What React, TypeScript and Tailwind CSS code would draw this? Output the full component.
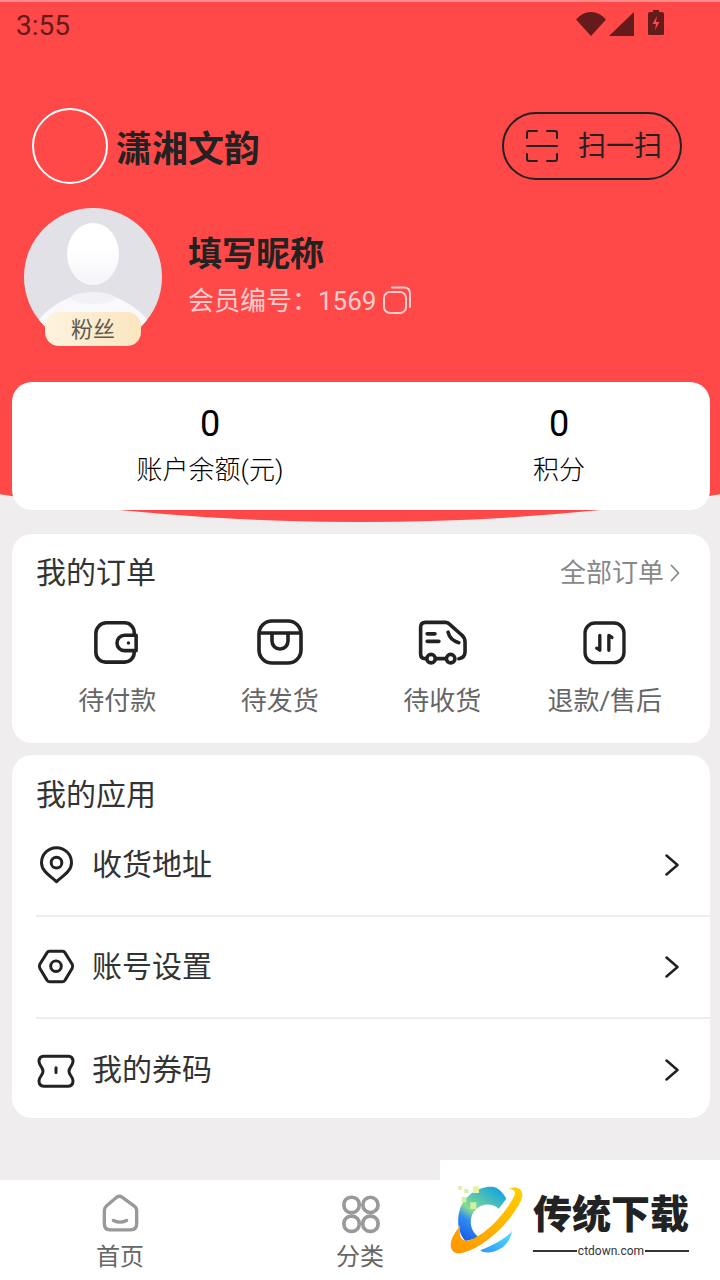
import type { ReactNode } from 'react';

const orders = [
  {
    label: '待付款',
    icon: (
      <svg className="-ml-[2px]" width="46" height="46" viewBox="0 0 48 48" fill="none" stroke="#222" strokeWidth="3.7">
        <path d="M43 16v-2a10 10 0 0 0-10-10H14A11 11 0 0 0 3 15v20a10 10 0 0 0 10 10h20a10 10 0 0 0 10-10v-2" />
        <path d="M45 17H33a8 8 0 0 0 0 16h12z" strokeLinejoin="round" />
        <circle cx="37" cy="25" r="1.8" fill="#222" stroke="none" />
      </svg>
    ),
  },
  {
    label: '待发货',
    icon: (
      <svg width="48" height="48" viewBox="0 0 48 48" fill="none" stroke="#222" strokeWidth="3.6">
        <rect x="3" y="3" width="42" height="42" rx="13" />
        <path d="M3.500 15h41" />
        <path d="M16 15v8a8 8 0 0 0 16 0v-8" />
      </svg>
    ),
  },
  {
    label: '待收货',
    icon: (
      <svg width="49" height="46" viewBox="80 25 150 140" fill="none" stroke="#222" strokeWidth="11" strokeLinecap="round" strokeLinejoin="round">
        <path d="M105 146h-3q-14 0-14-15V50q0-15 15-15h62q7 0 13 7l34 30q12 10 12 23v30q0 18-19 21" />
        <path d="M135 146h30" />
        <circle cx="120" cy="146" r="13" />
        <circle cx="180" cy="146" r="13" />
        <path d="M108 70h24M108 93h36M172 65q6 25 33 32" />
      </svg>
    ),
  },
  {
    label: '退款/售后',
    icon: (
      <svg width="47" height="47" viewBox="575 25 140 140" fill="none" stroke="#222" strokeWidth="10" strokeLinecap="round" strokeLinejoin="round">
        <rect x="587" y="37" width="116" height="118" rx="30" />
        <path d="M631 74v44l-9-6M658 118V74l9 6" />
      </svg>
    ),
  },
];

const apps: { label: string; icon: ReactNode }[] = [
  {
    label: '收货地址',
    icon: (
      <svg width="37" height="40" viewBox="50 45 110 120" fill="none" stroke="#222" strokeWidth="9" strokeLinejoin="round">
        <path d="M105 155C90 140 60 125 60 98a45 45 0 0 1 90 0c0 27-30 42-45 57z" />
        <circle cx="105" cy="98" r="16" />
      </svg>
    ),
  },
  {
    label: '账号设置',
    icon: (
      <svg width="40" height="38" viewBox="45 355 120 115" fill="none" stroke="#222" strokeWidth="9" strokeLinejoin="round">
        <path d="M56 404l22-35q2-4 7-4h40q5 0 7 4l22 35q3 6 0 12l-22 37q-2 4-7 4H85q-5 0-7-4l-22-37q-3-6 0-12z" />
        <circle cx="105" cy="410" r="16" />
      </svg>
    ),
  },
  {
    label: '我的券码',
    icon: (
      <svg width="40" height="37" viewBox="45 660 120 110" fill="none" stroke="#222" strokeWidth="9" strokeLinejoin="round" strokeLinecap="round">
        <path d="M68 672h74q14 0 14 16c0 12-12 17-12 29s12 17 12 29q0 16-14 16H68q-14 0-14-16c0-12 12-17 12-29s-12-17-12-29q0-16 14-16z" />
        <path d="M105 707v14" />
      </svg>
    ),
  },
];

const Chevron = ({ width, height, color, stroke }: { width: number; height: number; color: string; stroke: number }) => (
  <svg width={width} height={height} viewBox={`0 0 ${width} ${height}`} fill="none" stroke={color} strokeWidth={stroke} strokeLinecap="round" strokeLinejoin="round">
    <path d={`M1.500 1.500L${width - 1.5} ${height / 2}L1.500 ${height - 1.5}`} />
  </svg>
);

const StatusBar = () => (
  <div className="relative flex h-[48px] shrink-0 items-start justify-between pl-[16px] pr-[56px] pt-[8px]">
    <span className="text-[28px] leading-[36px] text-[#651b1b]">3:55</span>
    <div className="flex items-start pt-[4px]">
      <svg width="30" height="24" viewBox="0 0 30 24" fill="#651b1b">
        <path d="M15 24L0 7.500C4 3 9 0 15 0s11 3 15 7.500z" />
      </svg>
      <svg className="ml-[3px]" width="25" height="24" viewBox="0 0 25 24" fill="#651b1b">
        <path d="M25 0v24H0z" />
      </svg>
      <svg className="ml-[14px] -mt-[2px]" width="16" height="25" viewBox="0 0 16 25">
        <path d="M5 0h6v2h3q2 0 2 2v20q0 1-1 1H1q-1 0-1-1V4q0-2 2-2h3z" fill="#651b1b" />
        <path d="M9 6L4.500 14H8l-1 6 4.500-8H8z" fill="#ff4848" />
      </svg>
    </div>
  </div>
);

const Avatar = () => (
  <svg width="138" height="138" viewBox="0 0 138 138">
    <defs>
      <clipPath id="avatar-clip">
        <circle cx="69" cy="69" r="69" />
      </clipPath>
      <linearGradient id="avatar-head" x1="0" y1="0" x2="0" y2="1">
        <stop offset="0.4" stopColor="#ffffff" />
        <stop offset="1" stopColor="#f5f5fa" />
      </linearGradient>
    </defs>
    <circle cx="69" cy="69" r="69" fill="#e1e1e7" />
    <g clipPath="url(#avatar-clip)">
      <ellipse cx="69" cy="46" rx="26" ry="31" fill="url(#avatar-head)" />
      <path d="M8 138v-15c8-20 36-38 61-38s53 18 61 38v15z" fill="#f9f9fc" />
      <ellipse cx="69" cy="90" rx="22" ry="6" fill="#f2f2f6" />
    </g>
  </svg>
);

const Watermark = () => (
  <div className="absolute bottom-0 right-0 flex h-[120px] w-[280px] items-start bg-white pl-[7px] pt-[22px]">
    <svg className="shrink-0" width="80" height="72" viewBox="50 95 240 216">
      <defs>
        <linearGradient id="ring" x1="1" y1="0" x2="0" y2="1">
          <stop offset="0" stopColor="#ffd000" />
          <stop offset="1" stopColor="#ff9500" />
        </linearGradient>
        <linearGradient id="cee" x1="0.8" y1="0" x2="0.2" y2="1">
          <stop offset="0" stopColor="#12a4e0" />
          <stop offset="0.55" stopColor="#84dc90" />
          <stop offset="0.72" stopColor="#2f8cf0" />
          <stop offset="1" stopColor="#1b5fe8" />
        </linearGradient>
        <linearGradient id="wing" x1="1" y1="0" x2="0" y2="1">
          <stop offset="0" stopColor="#56e0ff" />
          <stop offset="1" stopColor="#2a98f4" />
        </linearGradient>
      </defs>
      <path d="M228 145l-23 30c-30-25-75-10-83 30-4 25 8 45 26 57l-43 10c-20-22-27-57-17-92 12-45 62-75 102-70 15 2 30 20 38 35z" fill="url(#cee)" />
      <path d="M245 112c25-4 40 13 25 43-30 60-105 135-175 153-30 7-40-18-30-43 7-17 20-33 25-40-5 30 0 45 20 47 60-17 120-92 140-132 8-15 5-22-15-25z" fill="url(#ring)" />
      <path d="M150 300c40-15 75-35 95-57-5 32-30 57-65 63-10 2-25 0-30-6z" fill="url(#wing)" />
      <g fill="#d5f0a0">
        <rect x="84" y="107" width="10" height="11" />
        <rect x="102" y="116" width="12" height="12" />
        <rect x="128" y="108" width="18" height="20" fill="#e8f2a0" />
        <rect x="94" y="140" width="14" height="16" />
        <rect x="120" y="156" width="18" height="20" />
      </g>
    </svg>
    <div className="ml-[6px] flex w-[156px] flex-col pt-[7px]">
      <span className="whitespace-nowrap text-center text-[39px] font-black leading-[52px] text-[#222]">传统下载</span>
      <div className="mt-[3px] flex items-center">
        <div className="h-[2px] flex-1 bg-[#333]" />
        <span className="px-[1px] text-[12px] leading-[14px] text-[#333]">ctdown.com</span>
        <div className="h-[2px] flex-1 bg-[#333]" />
      </div>
    </div>
  </div>
);

export default function App() {
  return (
    <div className="relative flex h-[1280px] w-[720px] flex-col overflow-hidden bg-[#efeded] font-['Roboto','Noto_Sans_CJK_SC',sans-serif]">
      {/* red header background with curved bottom */}
      <div className="absolute left-[-440px] top-0 h-[522px] w-[1600px] rounded-b-[800px_260px] bg-[#ff4848]" />
      <div className="absolute left-0 top-0 h-[2px] w-full bg-[#ff8a8a]" />

      <StatusBar />

      <div className="relative flex items-center pl-[32px] pr-[38px] pt-[60px]">
        <div className="h-[76px] w-[76px] rounded-full border-2 border-white" />
        <span className="ml-[8px] mt-[8px] text-[36px] font-bold leading-[48px] text-[#222]">潇湘文韵</span>
        <div className="ml-auto flex h-[68px] w-[180px] items-center rounded-full border-2 border-[#222] pl-[22px]">
          <svg width="32" height="32" viewBox="0 0 32 32" fill="none" stroke="#222" strokeWidth="2" strokeLinecap="round">
            <path d="M1 8V3q0-2 2-2h8M21 1h8q2 0 2 2v5M1 16h30M1 24v5q0 2 2 2h8M21 31h8q2 0 2-2v-5" />
          </svg>
          <span className="ml-[20px] mt-[1px] text-[28px] leading-[36px] text-[#222]">扫一扫</span>
        </div>
      </div>

      <div className="relative flex pl-[24px] pt-[24px]">
        <div className="relative h-[138px] w-[138px]">
          <Avatar />
          <div className="absolute bottom-0 left-[21px] flex h-[34px] w-[96px] items-center justify-center rounded-[14px] bg-gradient-to-r from-[#fdf3dd] to-[#fbe5c0] text-[22px] text-[#5f5a50]">
            粉丝
          </div>
        </div>
        <div className="ml-[26px] flex flex-col pt-[23px]">
          <span className="text-[34px] font-bold leading-[46px] text-[#222]">填写昵称</span>
          <div className="mt-[5px] flex items-center text-[26px] leading-[38px] text-[#ffcdcd]">
            <span>会员编号：1569</span>
            <svg className="mb-[2px] ml-[7px]" width="28" height="28" viewBox="0 0 28 28" fill="none" stroke="#ffcdcd" strokeWidth="2">
              <rect x="1" y="6" width="22" height="21" rx="6" />
              <path d="M9 1.500h12q6 0 6 6V21" strokeLinecap="round" />
            </svg>
          </div>
        </div>
      </div>

      <div className="relative ml-[12px] mr-[10px] mt-[36px] grid h-[128px] grid-cols-[396px_302px] rounded-[20px] bg-white pt-[21px] text-black">
        {[
          ['0', '账户余额(元)'],
          ['0', '积分'],
        ].map(([value, label]) => (
          <div key={label} className="flex flex-col items-center">
            <span className="text-[36px] leading-[42px]">{value}</span>
            <span className="mt-[7px] text-[26px] font-light leading-[36px]">{label}</span>
          </div>
        ))}
      </div>

      <div className="relative ml-[12px] mr-[10px] mt-[24px] h-[209px] rounded-[20px] bg-white">
        <div className="flex items-center justify-between pl-[24px] pr-[30px] pt-[19px]">
          <span className="text-[30px] leading-[40px] text-[#333]">我的订单</span>
          <div className="flex items-center text-[26px] leading-[40px] text-[#888]">
            全部订单
            <span className="ml-[6px]">
              <Chevron width={10} height={18} color="#888" stroke={1.8} />
            </span>
          </div>
        </div>
        <div className="grid grid-cols-4 px-[24px] pt-[24px]">
          {orders.map((o) => (
            <div key={o.label} className="flex flex-col items-center">
              <div className="flex h-[50px] items-center justify-center">{o.icon}</div>
              <span className="mt-[16px] text-[26px] leading-[36px] text-[#666]">{o.label}</span>
            </div>
          ))}
        </div>
      </div>

      <div className="relative ml-[12px] mr-[10px] mt-[12px] h-[363px] rounded-[20px] bg-white pt-[20px]">
        <div className="pl-[24px] text-[30px] leading-[40px] text-[#333]">我的应用</div>
        {apps.map((a, i) => (
          <div key={a.label} className={`ml-[24px] flex h-[102px] items-center pr-[31px] ${i < 2 ? 'border-b-2 border-[#eeeeee]' : ''}`}>
            <div className="flex w-[40px] justify-center">{a.icon}</div>
            <span className="ml-[16px] text-[30px] leading-[40px] text-[#333]">{a.label}</span>
            <span className="ml-auto">
              <Chevron width={14} height={22} color="#222" stroke={2.5} />
            </span>
          </div>
        ))}
      </div>

      <div className="relative mt-auto grid h-[100px] grid-cols-3 bg-white">
        <div className="flex flex-col items-center pt-[12px]">
          <svg width="40" height="42" viewBox="120 65 120 125" fill="none" stroke="#999" strokeWidth="10" strokeLinecap="round" strokeLinejoin="round">
            <path d="M133 120q0-8 7-14l30-26q8-6 16 0l36 26q8 6 8 14v40q0 18-18 18h-62q-17 0-17-18z" />
            <path d="M160 150q20 10 40 0" />
          </svg>
          <span className="mt-[5px] text-[24px] leading-[36px] text-[#666]">首页</span>
        </div>
        <div className="flex flex-col items-center pt-[12px]">
          <svg width="43" height="43" viewBox="835 60 130 130" fill="none" stroke="#999" strokeWidth="11">
            <rect x="850" y="76" width="46" height="46" rx="21" />
            <rect x="907" y="76" width="46" height="46" rx="23" />
            <rect x="850" y="133" width="46" height="46" rx="21" />
            <rect x="907" y="133" width="46" height="46" rx="21" />
          </svg>
          <span className="mt-[4px] text-[24px] leading-[36px] text-[#666]">分类</span>
        </div>
      </div>

      <Watermark />
    </div>
  );
}
